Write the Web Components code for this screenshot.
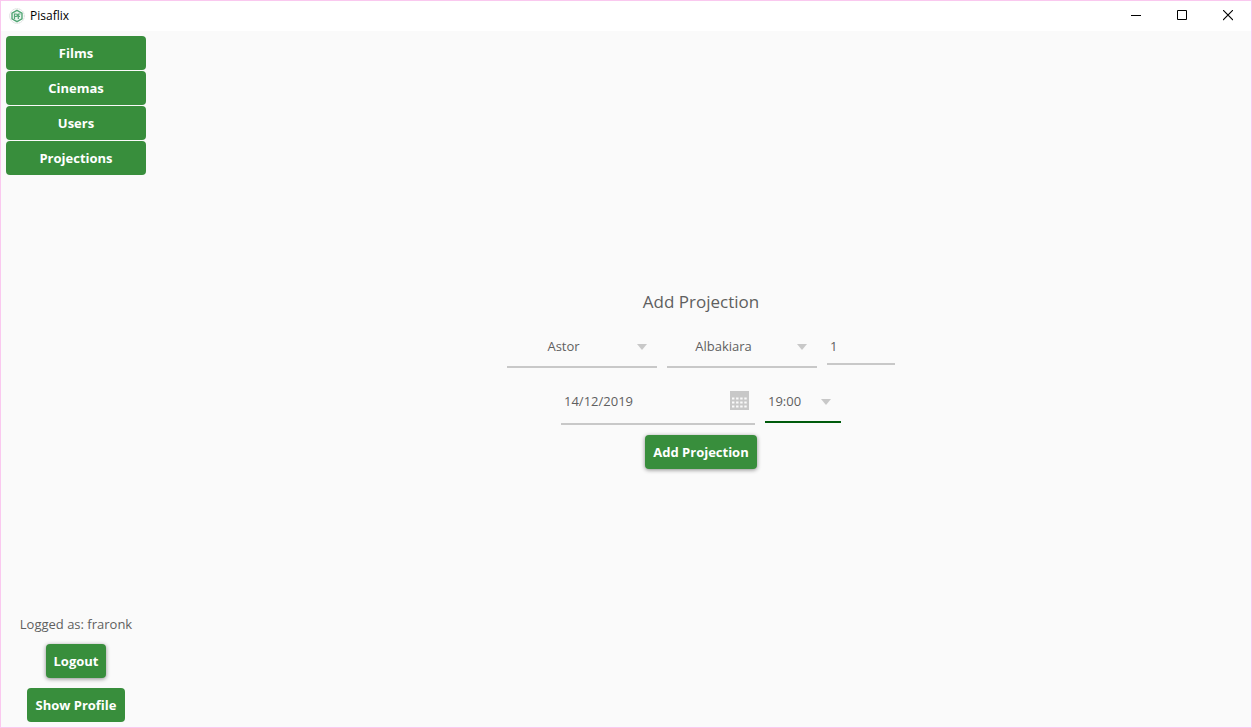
<!DOCTYPE html>
<html lang="en">
<head>
<meta charset="utf-8">
<title>Pisaflix</title>
<style>
  html, body { margin: 0; height: 100%; }
  body {
    --green: #388e3c;
    --line: #c8c8c8;
    --focus: #005b0c;
    --text: #5f5f5f;
    font: 13px/20px "Open Sans", "Noto Sans", sans-serif;
    color: var(--text);
  }
</style>
</head>
<body>
<pf-app></pf-app>
<script>
function define(name, html, setup) {
  const template = document.createElement('template');
  template.innerHTML = html;
  customElements.define(name, class extends HTMLElement {
    connectedCallback() {
      if (this.shadowRoot) return;
      const root = this.attachShadow({ mode: 'open' });
      root.append(template.content.cloneNode(true));
      if (setup) setup(this, root);
    }
  });
}

define('pf-button', `
  <style>
    :host { display: block; }
    button {
      box-sizing: border-box; width: 100%; height: 34px; padding: 0 8px; border: 0;
      border-radius: 4px; background: var(--green); color: #fff;
      font: bold 13px/20px "Open Sans", "Noto Sans", sans-serif; white-space: nowrap; cursor: pointer;
    }
    :host([raised]) button { box-shadow: 0 1px 4px rgba(0, 0, 0, .45); }
  </style>
  <button type="button"><slot></slot></button>`);

define('pf-select', `
  <style>
    :host { display: grid; height: 43px; align-items: center; }
    select, svg { grid-area: 1 / 1; }
    select {
      appearance: none; box-sizing: border-box; width: 100%; height: 43px; margin: 0;
      padding: 0 37px 0 0; border: 0; border-bottom: 2px solid var(--line); border-radius: 0;
      background: transparent; color: inherit; font: inherit; text-align-last: center; outline: 0;
    }
    :host([start]) select { padding: 0 24px 0 3px; text-align-last: left; }
    :host([active]) select { border-color: var(--focus); }
    svg { justify-self: end; margin-right: 10px; pointer-events: none; }
  </style>
  <select></select>
  <svg width="10" height="6" viewBox="0 0 10 6" aria-hidden="true"><path d="M0 0h10L5 6z" fill="#c8c8c8"/></svg>`,
  (host, root) => {
    const select = root.querySelector('select');
    select.setAttribute('aria-label', host.getAttribute('label'));
    select.add(new Option(host.getAttribute('value')));
  });

define('pf-input', `
  <style>
    :host { display: block; }
    input {
      box-sizing: border-box; display: block; width: 100%; height: 37px; margin: 0; padding: 0 3px;
      border: 0; border-bottom: 2px solid var(--line); border-radius: 0;
      background: transparent; color: inherit; font: inherit; outline: 0;
    }
  </style>
  <input type="text">`,
  (host, root) => {
    const input = root.querySelector('input');
    input.setAttribute('aria-label', host.getAttribute('label'));
    input.value = host.getAttribute('value');
  });

define('pf-date', `
  <style>
    :host {
      display: flex; align-items: center; box-sizing: border-box; height: 47px;
      padding: 0 6px 0 3px; border-bottom: 2px solid var(--line);
    }
    input {
      flex: 1; min-width: 0; height: 32px; padding: 0; border: 0; background: transparent;
      color: inherit; font: inherit; outline: 0;
    }
    button { display: block; padding: 0; border: 0; background: none; cursor: pointer; }
    svg { display: block; }
  </style>
  <input type="text" aria-label="Date">
  <button type="button" aria-label="Open calendar">
    <svg width="19" height="19" viewBox="0 0 19 19">
      <path d="M0 0h19v19H0z" fill="#c8c8c8"/>
      <path d="M2 7.5h15M2 11.5h15M2 15.5h15" stroke="#fafafa" stroke-width="2.2" stroke-dasharray="2.4 1.7"/>
    </svg>
  </button>`,
  (host, root) => { root.querySelector('input').value = host.getAttribute('value'); });

define('pf-titlebar', `
  <style>
    :host {
      display: flex; align-items: center; height: 30px; background: #fff; color: #000;
      font: 12px/16px "Open Sans", "Noto Sans", sans-serif;
    }
    .logo { margin: 0 5px 0 8px; }
    .name { flex: 1; }
    button { width: 46px; height: 30px; padding: 0 0 1px; border: 0; background: none; color: inherit; }
    button svg { display: block; margin: 0 auto; }
  </style>
  <svg class="logo" width="16" height="16" viewBox="0 0 16 16" fill="none" aria-hidden="true">
    <circle cx="8" cy="8" r="7.3" stroke="#cfd6d1" stroke-width=".9" stroke-dasharray="1.5 .6"/>
    <path d="M8 2.300l5 2.800v5.800L8 13.700l-5-2.800V5.100z" fill="#eaf5ee" stroke="#54a777" stroke-width="1.400"/>
    <path d="M5.500 11V6h1.700c1.500 0 1.500 2.500 0 2.500H5.500M9.300 11V6h2.200M9.300 8.400h1.700" stroke="#54a777" stroke-width="1.200"/>
  </svg>
  <span class="name">Pisaflix</span>
  <button type="button" aria-label="Minimize"><svg width="10" height="11" viewBox="0 0 10 11"><path d="M0 5h10v1H0z"/></svg></button>
  <button type="button" aria-label="Maximize"><svg width="10" height="11" viewBox="0 0 10 11"><path d="M.5.5h9v9H.5z" fill="none" stroke="#000"/></svg></button>
  <button type="button" aria-label="Close"><svg width="10" height="11" viewBox="0 0 10 11"><path d="M0 0l10 10M10 0L0 10" stroke="#000" stroke-width="1.100"/></svg></button>`);

define('pf-sidebar', `
  <style>
    :host {
      display: flex; flex-direction: column; justify-content: space-between;
      box-sizing: border-box; width: 150px; padding: 5px;
    }
    nav { display: grid; gap: 1px; }
    .account { display: flex; flex-direction: column; align-items: center; gap: 10px; }
  </style>
  <nav aria-label="Sections">
    <pf-button>Films</pf-button>
    <pf-button>Cinemas</pf-button>
    <pf-button>Users</pf-button>
    <pf-button>Projections</pf-button>
  </nav>
  <div class="account">
    <span>Logged as: fraronk</span>
    <pf-button raised>Logout</pf-button>
    <pf-button>Show Profile</pf-button>
  </div>`);

define('pf-projection-form', `
  <style>
    :host { display: flex; align-items: center; justify-content: center; }
    form { display: flex; flex-direction: column; align-items: center; gap: 10px; }
    h1 { margin: 0; font-size: 17px; line-height: 26px; font-weight: 400; }
    .row { display: flex; align-items: center; gap: 10px; }
    .wide { width: 150px; }
    .room { width: 68px; }
    .date { width: 194px; }
    .time { width: 76px; }
  </style>
  <form>
    <h1>Add Projection</h1>
    <div class="row">
      <pf-select class="wide" label="Film" value="Astor"></pf-select>
      <pf-select class="wide" label="Cinema" value="Albakiara"></pf-select>
      <pf-input class="room" label="Room" value="1"></pf-input>
    </div>
    <div class="row">
      <pf-date class="date" value="14/12/2019"></pf-date>
      <pf-select class="time" start active label="Time" value="19:00"></pf-select>
    </div>
    <pf-button raised>Add Projection</pf-button>
  </form>`);

define('pf-app', `
  <style>
    :host {
      display: flex; flex-direction: column; box-sizing: border-box; min-height: 100vh;
      border: 1px solid #fac8ef; background: #fafafa;
    }
    .body { flex: 1; display: flex; }
    pf-projection-form { flex: 1; }
  </style>
  <pf-titlebar></pf-titlebar>
  <div class="body">
    <pf-sidebar></pf-sidebar>
    <pf-projection-form></pf-projection-form>
  </div>`);
</script>
</body>
</html>
